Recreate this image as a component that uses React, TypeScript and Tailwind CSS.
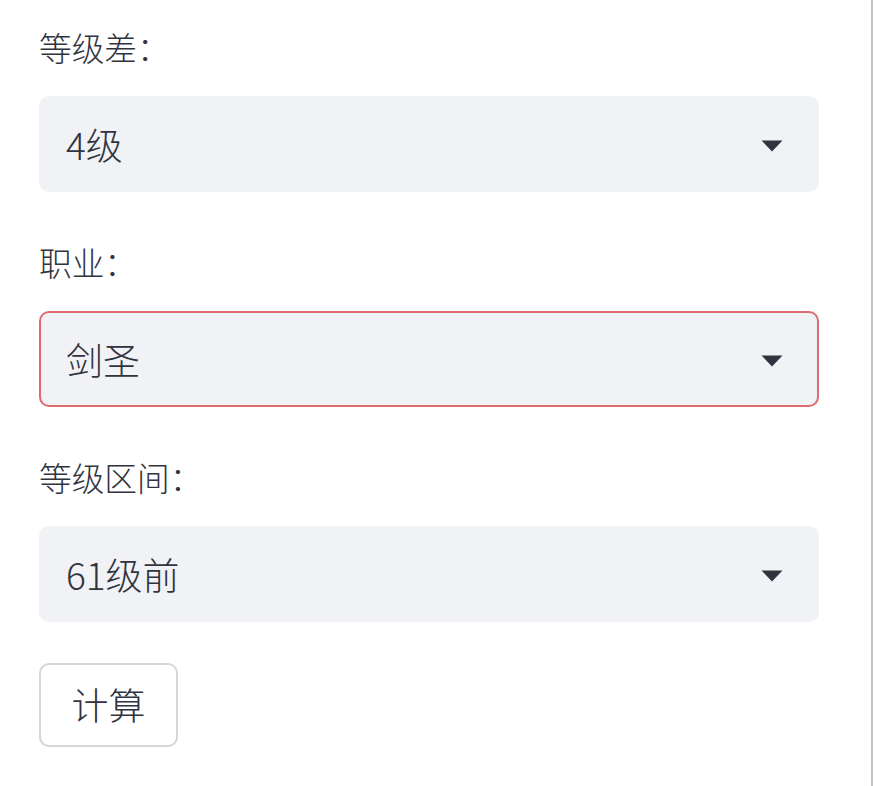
import React from "react";

const Arrow = () => (
  <svg width="22" height="12" viewBox="0 0 22 12" className="mt-[3px] shrink-0">
    <path d="M0.5 0.5 H21.5 L11 11.5 Z" fill="#31333F" />
  </svg>
);

const Select = ({ value, focused }: { value: string; focused?: boolean }) => (
  <div
    className={
      "mt-[26px] flex h-[96px] w-[780px] items-center justify-between rounded-[10px] bg-[#F0F2F6] pl-[25px] pr-[34px] text-[37px] text-[#31333F] " +
      (focused ? "border-2 border-[#dc6a6e]" : "border-2 border-transparent")
    }
  >
    <span className="leading-none">{value}</span>
    <Arrow />
  </div>
);

const Label = ({ text }: { text: string }) => (
  <div className="h-[46px] text-[32.7px] leading-[46px] text-[#31333F]">{text}</div>
);

export default function App() {
  return (
    <div
      className="h-[786px] w-[873px] border-r-2 border-[#c4c4c4] bg-white font-light"
      style={{ fontFamily: '"Noto Sans CJK SC", "Noto Sans", sans-serif' }}
    >
      <div className="flex flex-col pl-[39px] pt-[24px]">
        <Label text="等级差：" />
        <Select value="4级" />
        <div className="mt-[47px]">
          <Label text="职业：" />
        </div>
        <Select value="剑圣" focused />
        <div className="mt-[47px]">
          <Label text="等级区间：" />
        </div>
        <Select value="61级前" />
        <button className="mt-[41px] flex h-[84px] w-[139px] items-center justify-center rounded-[10px] border-2 border-[#d6d6d9] bg-white text-[37px] text-[#31333F]">
          计算
        </button>
      </div>
    </div>
  );
}
